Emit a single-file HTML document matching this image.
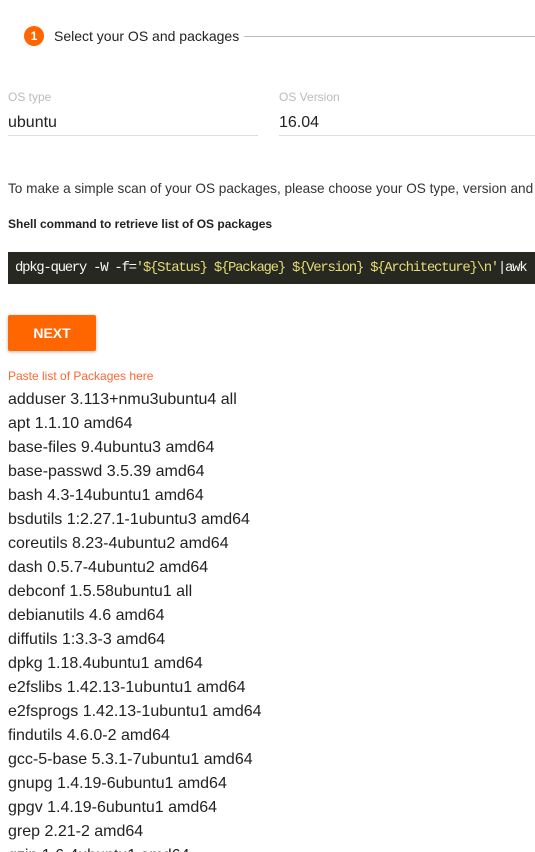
<!DOCTYPE html>
<html><head><meta charset="utf-8"><style>
html,body{margin:0;width:535px;height:852px;overflow:hidden}
body{background:#fff;font-family:"Liberation Sans",sans-serif;color:#222;position:relative}
.a{position:absolute;white-space:nowrap;overflow:hidden}
</style></head><body>
<div class="a" style="left:24px;top:26px;width:20px;height:20px;border-radius:50%;background:#ff6600;color:#fff;font-size:12px;font-weight:bold;text-align:center;line-height:20px">1</div>
<div class="a" style="left:54px;top:28px;font-size:14px;color:#222">Select your OS and packages</div>
<div class="a" style="left:244px;top:36px;width:291px;height:1px;background:#bbb"></div>
<div class="a" style="left:8px;top:90px;font-size:12px;color:#bbb">OS type</div>
<div class="a" style="left:8px;top:114px;font-size:16px;color:#222">ubuntu</div>
<div class="a" style="left:8px;top:135px;width:250px;height:1px;background:#ddd"></div>
<div class="a" style="left:279px;top:90px;font-size:12px;color:#bbb">OS Version</div>
<div class="a" style="left:279px;top:114px;font-size:16px;color:#222">16.04</div>
<div class="a" style="left:279px;top:135px;width:256px;height:1px;background:#ddd"></div>
<div class="a" style="left:8px;top:181px;width:527px;font-size:13.6px;color:#333">To make a simple scan of your OS packages, please choose your OS type, version and</div>
<div class="a" style="left:8px;top:217px;font-size:12px;font-weight:bold;color:#222">Shell command to retrieve list of OS packages</div>
<div class="a" style="left:8px;top:252px;width:520px;height:32px;background:#272822;font-family:'Liberation Mono',monospace;font-size:14px;line-height:32px;color:#f8f8f2;padding-left:7px;letter-spacing:-1.3px">dpkg-query -W -f=<span style="color:#e6db74">'${Status} ${Package} ${Version} ${Architecture}\n'</span>|awk '</div>
<div class="a" style="left:8px;top:315px;width:88px;height:36px;background:#ff6600;color:#fff;font-size:14px;font-weight:bold;text-align:center;line-height:36px;border-radius:2px;box-shadow:0 1px 3px rgba(0,0,0,.3);overflow:visible">NEXT</div>
<div class="a" style="left:8px;top:369px;font-size:12px;color:#ff6633">Paste list of Packages here</div>
<div class="a" style="left:8px;top:388px;font-size:16px;line-height:24px;color:#222;height:464px">adduser 3.113+nmu3ubuntu4 all<br>apt 1.1.10 amd64<br>base-files 9.4ubuntu3 amd64<br>base-passwd 3.5.39 amd64<br>bash 4.3-14ubuntu1 amd64<br>bsdutils 1:2.27.1-1ubuntu3 amd64<br>coreutils 8.23-4ubuntu2 amd64<br>dash 0.5.7-4ubuntu2 amd64<br>debconf 1.5.58ubuntu1 all<br>debianutils 4.6 amd64<br>diffutils 1:3.3-3 amd64<br>dpkg 1.18.4ubuntu1 amd64<br>e2fslibs 1.42.13-1ubuntu1 amd64<br>e2fsprogs 1.42.13-1ubuntu1 amd64<br>findutils 4.6.0-2 amd64<br>gcc-5-base 5.3.1-7ubuntu1 amd64<br>gnupg 1.4.19-6ubuntu1 amd64<br>gpgv 1.4.19-6ubuntu1 amd64<br>grep 2.21-2 amd64<br>gzip 1.6-4ubuntu1 amd64</div>
</body></html>
